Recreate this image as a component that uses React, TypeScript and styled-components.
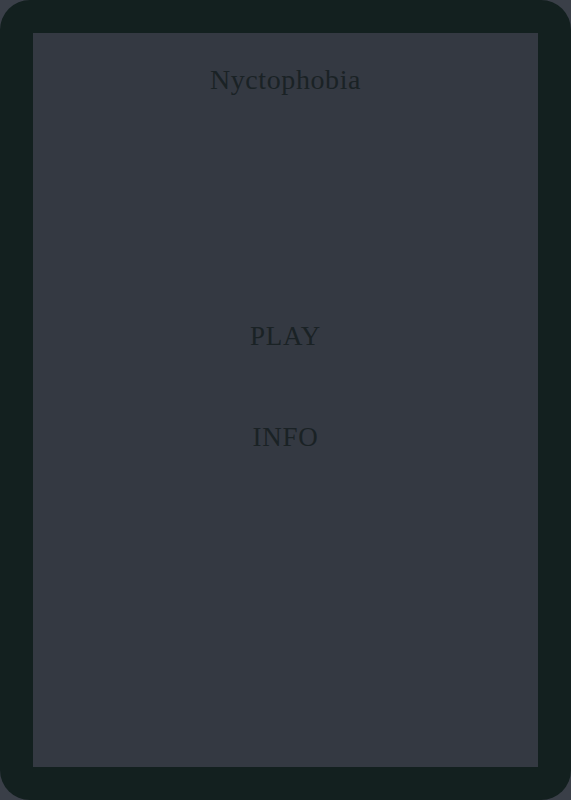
import React from 'react'
import styled, { createGlobalStyle } from 'styled-components'

const GlobalStyle = createGlobalStyle`
  html, body {
    margin: 0;
    padding: 0;
    background: #3a3f48;
  }
`

const Frame = styled.div`
  width: 571px;
  height: 800px;
  box-sizing: border-box;
  padding: 33px;
  background: #13201f;
  border-radius: 30px;
  display: flex;
`

const Panel = styled.main`
  flex: 1;
  display: flex;
  flex-direction: column;
  align-items: center;
  background: #343942;
  font-family: "Liberation Serif", serif;
  color: #1a2225;
`

const Title = styled.h1`
  margin: 31px 0 0;
  font-size: 28px;
  font-weight: 400;
  line-height: 32px;
  letter-spacing: 0.6px;
`

const Menu = styled.nav`
  margin-top: 224px;
  display: flex;
  flex-direction: column;
  align-items: center;
  gap: 69px;
`

const MenuItem = styled.button`
  border: none;
  background: none;
  padding: 0;
  font-family: inherit;
  color: inherit;
  font-size: 27px;
  line-height: 32px;
  letter-spacing: 0.8px;
  cursor: pointer;
`

export default function App() {
  return (
    <>
      <GlobalStyle />
      <Frame>
        <Panel>
          <Title>Nyctophobia</Title>
          <Menu>
            <MenuItem>PLAY</MenuItem>
            <MenuItem>INFO</MenuItem>
          </Menu>
        </Panel>
      </Frame>
    </>
  )
}
